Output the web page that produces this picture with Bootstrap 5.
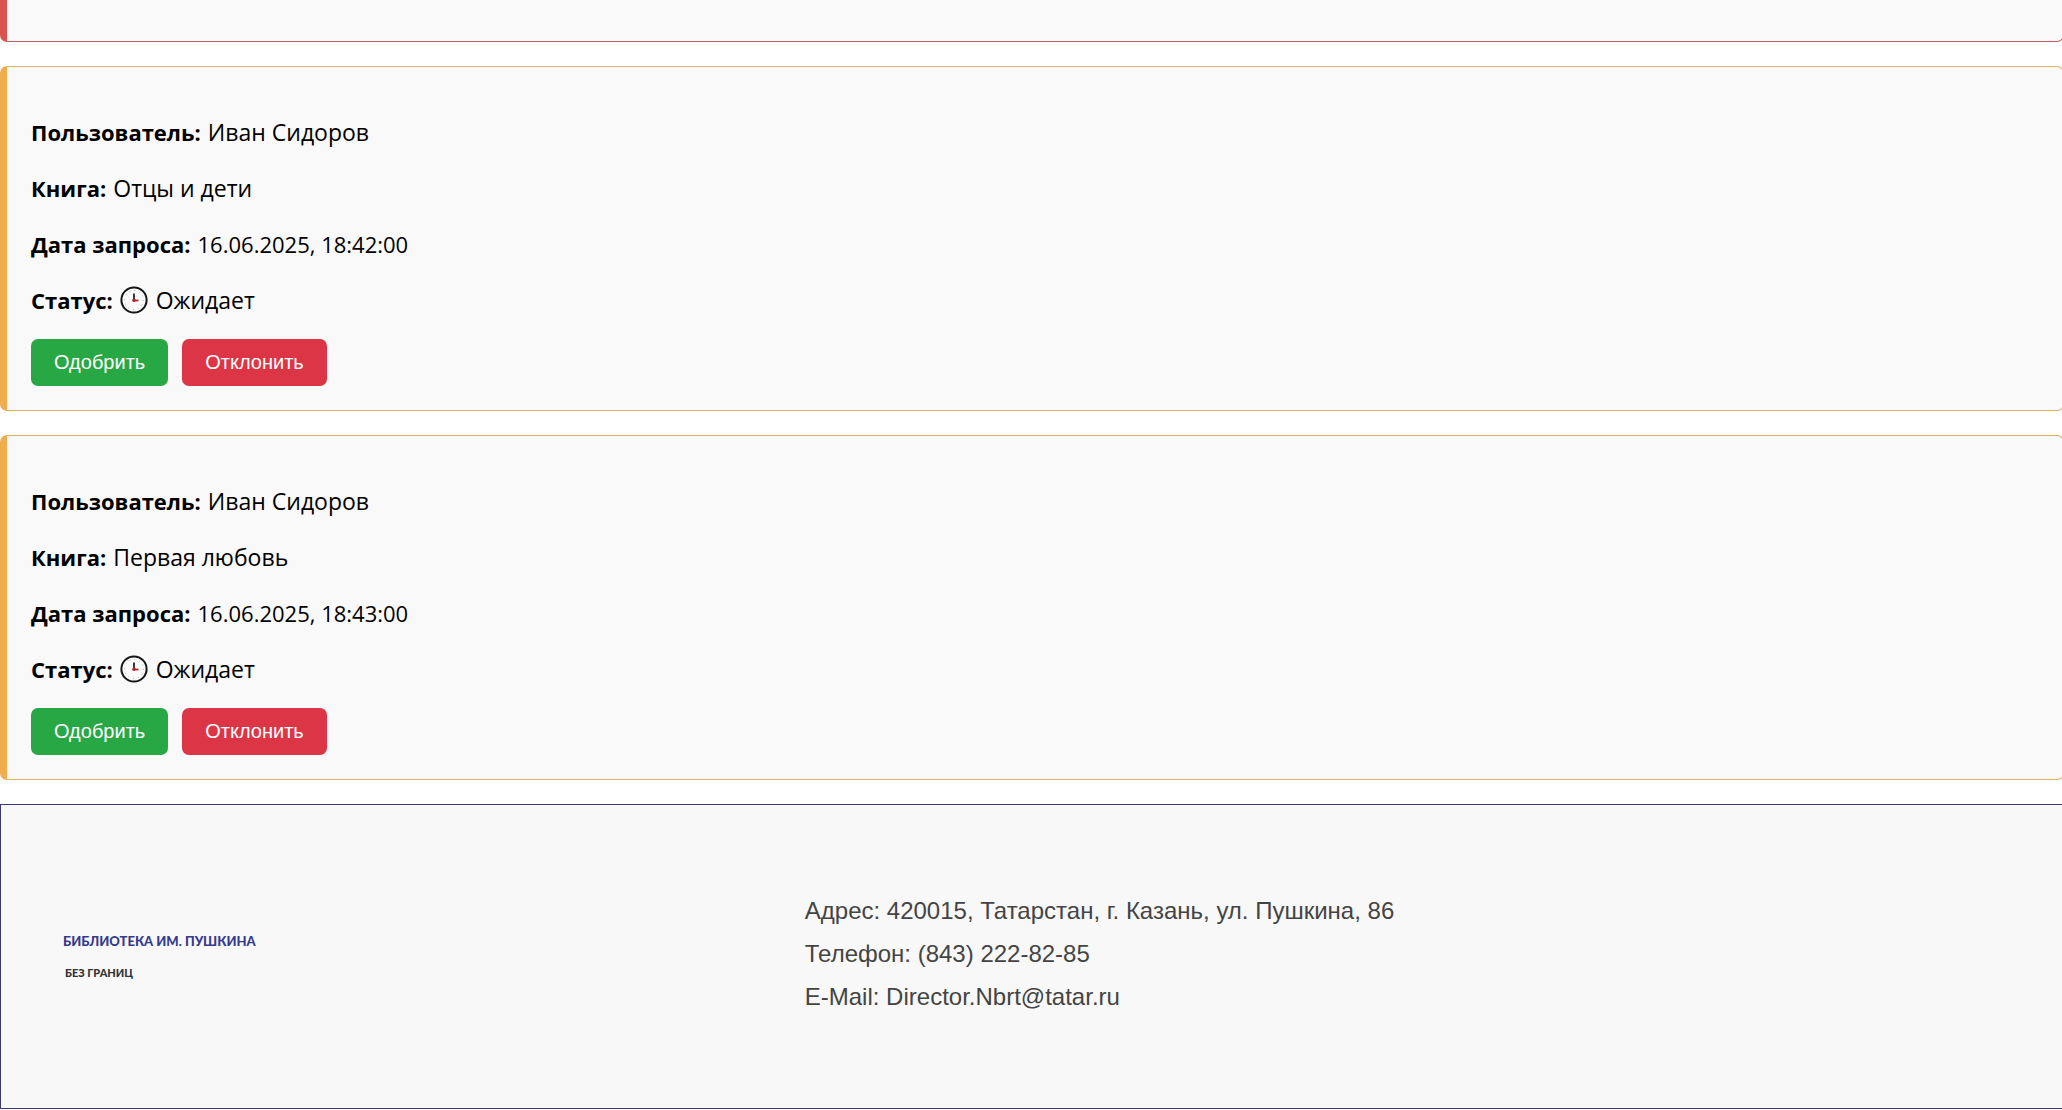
<!DOCTYPE html>
<html lang="ru">
<head>
<meta charset="utf-8">
<meta name="viewport" content="width=device-width, initial-scale=1">
<title>Запросы на книги</title>
<link href="https://cdn.jsdelivr.net/npm/bootstrap@5.3.0/dist/css/bootstrap.min.css" rel="stylesheet">
<style>
  body { color: #000; background: #fff; overflow-x: hidden; font-family: "Open Sans", "Noto Sans", sans-serif; font-size: 23px; line-height: 32px; }
  /* the list runs slightly past the right edge of the window */
  .request-list { margin-right: -2px; }
  .request { background: #f9f9f9; border: 1px solid #dfb067; border-left: 7px solid #f0ad4e; border-radius: 7px; padding: 49px 24px 24px; }
  .request p { margin: 0 0 24px; }
  .request p:last-of-type { margin-bottom: 23px; }
  .request strong, .request time { font-size: 22px; }
  .request strong { margin-right: 1px; }
  .request-rejected { border-color: #b9605f; border-left-color: #d9534f; border-top: 0; border-top-left-radius: 0; border-top-right-radius: 0; padding: 0; min-height: 42px; }
  .request .btn { border: 0; border-radius: 7px; color: #fff; font-family: "Liberation Sans", sans-serif; font-size: 20px; line-height: 23px; padding: 12px 23px; }
  .btn-approve, .btn-approve:hover { background: #28a745; }
  .btn-reject, .btn-reject:hover { background: #dc3545; }
  .actions { gap: 14px; }
  .clock { width: 28px; height: 28px; vertical-align: -5px; margin: 0 2px 0 0; }
  .site-footer { background: #f8f8f8; border: 1px solid #3c3a6e; border-right: 0; min-height: 305px; font-family: "Liberation Sans", sans-serif; }
  .brand { width: 39%; padding-left: 62px; font-family: Lato, sans-serif; font-weight: 900; }
  .brand-name { color: #353a8c; font-size: 13px; }
  .brand-motto { color: #333; font-size: 11px; padding-left: 2px; }
  .contacts { color: #444; font-size: 24px; line-height: 43px; padding-bottom: 6px; }
</style>
</head>
<body>
<main class="request-list d-flex flex-column gap-4 mb-4">
  <article class="request request-rejected"></article>
  <article class="request">
    <p><strong>Пользователь:</strong> Иван Сидоров</p>
    <p><strong>Книга:</strong> Отцы и дети</p>
    <p><strong>Дата запроса:</strong> <time datetime="2025-06-16T18:42:00">16.06.2025, 18:42:00</time></p>
    <p><strong>Статус:</strong> <svg class="clock" viewBox="0 0 28 28" aria-hidden="true"><circle cx="14" cy="14" r="12.6" fill="#fafafa" stroke="#151515" stroke-width="2"/><circle cx="14" cy="14" r="9.5" fill="none" stroke="#aaa" stroke-width="1" stroke-dasharray="1 3.97"/><path d="M14 7.5V15" stroke="#222" stroke-width="1.8"/><path d="M13 14.5H18.5" stroke="#a33" stroke-width="1.8"/><circle cx="14" cy="14.3" r="1.8" fill="#b22"/></svg> Ожидает</p>
    <div class="actions d-flex">
      <button type="button" class="btn btn-approve">Одобрить</button>
      <button type="button" class="btn btn-reject">Отклонить</button>
    </div>
  </article>
  <article class="request">
    <p><strong>Пользователь:</strong> Иван Сидоров</p>
    <p><strong>Книга:</strong> Первая любовь</p>
    <p><strong>Дата запроса:</strong> <time datetime="2025-06-16T18:43:00">16.06.2025, 18:43:00</time></p>
    <p><strong>Статус:</strong> <svg class="clock" viewBox="0 0 28 28" aria-hidden="true"><circle cx="14" cy="14" r="12.6" fill="#fafafa" stroke="#151515" stroke-width="2"/><circle cx="14" cy="14" r="9.5" fill="none" stroke="#aaa" stroke-width="1" stroke-dasharray="1 3.97"/><path d="M14 7.5V15" stroke="#222" stroke-width="1.8"/><path d="M13 14.5H18.5" stroke="#a33" stroke-width="1.8"/><circle cx="14" cy="14.3" r="1.8" fill="#b22"/></svg> Ожидает</p>
    <div class="actions d-flex">
      <button type="button" class="btn btn-approve">Одобрить</button>
      <button type="button" class="btn btn-reject">Отклонить</button>
    </div>
  </article>
</main>
<footer class="site-footer d-flex flex-wrap flex-lg-nowrap align-items-center">
  <div class="brand flex-shrink-0">
    <div class="brand-name">БИБЛИОТЕКА ИМ. ПУШКИНА</div>
    <div class="brand-motto">БЕЗ ГРАНИЦ</div>
  </div>
  <address class="contacts mb-0">
    <div>Адрес: 420015, Татарстан, г. Казань, ул. Пушкина, 86</div>
    <div>Телефон: (843) 222-82-85</div>
    <div>E-Mail: Director.Nbrt@tatar.ru</div>
  </address>
</footer>
<script src="https://cdn.jsdelivr.net/npm/bootstrap@5.3.0/dist/js/bootstrap.bundle.min.js"></script>
</body>
</html>
